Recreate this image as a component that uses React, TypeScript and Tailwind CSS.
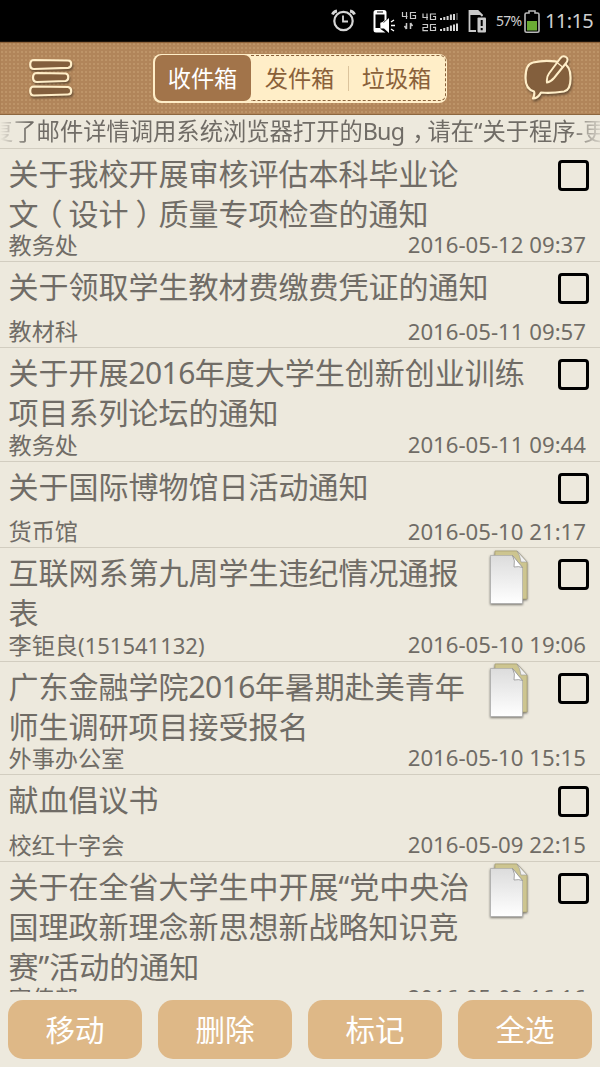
import React from "react";

type Mail = {
  title: React.ReactNode;
  sender: React.ReactNode;
  date: string;
  file?: boolean;
};

const mails: Mail[] = [
  {
    title: (
      <>
        关于我校开展审核评估本科毕业论
        <br />文<span className="-ml-[6px] mr-[6px]">（</span>设计
        <span className="ml-[7px] -mr-[7px]">）</span>质量专项检查的通知
      </>
    ),
    sender: "教务处",
    date: "2016-05-12 09:37",
  },
  { title: "关于领取学生教材费缴费凭证的通知", sender: "教材科", date: "2016-05-11 09:57" },
  {
    title: (
      <>
        关于开展<span className="tracking-[-0.6px]">2016</span>年度大学生创新创业训练
        <br />
        项目系列论坛的通知
      </>
    ),
    sender: "教务处",
    date: "2016-05-11 09:44",
  },
  { title: "关于国际博物馆日活动通知", sender: "货币馆", date: "2016-05-10 21:17" },
  {
    title: (
      <>
        互联网系第九周学生违纪情况通报
        <br />表
      </>
    ),
    sender: (
      <>
        李钜良<span className="text-[22px]">(151541132)</span>
      </>
    ),
    date: "2016-05-10 19:06",
    file: true,
  },
  {
    title: (
      <>
        广东金融学院<span className="tracking-[-0.6px]">2016</span>年暑期赴美青年
        <br />
        师生调研项目接受报名
      </>
    ),
    sender: "外事办公室",
    date: "2016-05-10 15:15",
    file: true,
  },
  { title: "献血倡议书", sender: "校红十字会", date: "2016-05-09 22:15" },
  {
    title: (
      <>
        关于在全省大学生中开展“党中央治
        <br />
        国理政新理念新思想新战略知识竞
        <br />
        赛”活动的通知
      </>
    ),
    sender: "宣传部",
    date: "2016-05-09 16:16",
    file: true,
  },
];

const StatusIcons = () => (
  <svg width="165" height="42" viewBox="325 0 165 42" fill="none">
    {/* alarm clock */}
    <g stroke="#d6d6d6">
      <circle cx="343.500" cy="21" r="9.200" strokeWidth="2.200" />
      <path d="M343 15.500v6h5" strokeWidth="1.800" />
      <path d="M332.500 14.500q1-3 4.500-3.500M354.500 14.500q-1-3-4.500-3.500" strokeWidth="2.800" />
    </g>
    {/* phone with speaker */}
    <path
      d="M376 10h8q2.500 0 2.500 2.500v7l-6 5.500v4l5 3.500H376q-2.500 0-2.500-2.500v-17.500Q373.500 10 376 10z"
      fill="#fff"
    />
    <path d="M375.500 14.500h9v6l-4 3v4.500h-5z" fill="#000" />
    <path d="M377 12h6" stroke="#000" />
    <path d="M380.500 22.500h3.500l5-4.500v15l-5-4.500h-3.500z" fill="#fff" />
    <path d="M391 22l3-2M391 25.500h4M391 29l3 2" stroke="#fff" strokeWidth="1.400" />
    {/* network labels */}
    <g stroke="#c9c9c9" strokeWidth="1.200">
      <path d="M402.500 12v4.500h5M406.500 12v7M416 12.500h-5.500v6h5v-3h-3" />
      <path d="M423 13.500v4h5M427 13.500v6.500M436 14h-5.500v5.500h5v-3h-2.500" />
      <path d="M422.500 24.500h5v3h-4.500v3.200h5M436 24.500h-5.500v6h5v-3.200h-2.500" />
      <path d="M406.500 23v6M404.500 26l2 3M410.500 29v-6M412.500 26l-2-3" strokeWidth="1.500" />
    </g>
    <path
      d="M441 20v-2M444.300 20v-3M447.600 20v-4M450.900 20v-5.500M441 31v-2M444.300 31v-3M447.600 31v-4M450.900 31v-5.500M454 31v-6.500M457 31v-7.500"
      stroke="#d6d6d6"
      strokeWidth="2"
    />
    <path d="M454 20v-6" stroke="#d6d6d6" strokeWidth="2" />
    <path d="M457 20v-7" stroke="#444" strokeWidth="2" />
    {/* sim card */}
    <path d="M476 31h-6.500V11h8l5 5" stroke="#c9c9c9" strokeWidth="1.800" />
    <path d="M470 10h8l5 5h-13z" fill="#c9c9c9" />
    <rect x="477.500" y="17.500" width="8.500" height="15" rx="1" fill="#c9c9c9" />
    <path d="M481.700 20v6M481.700 28v2.200" stroke="#000" strokeWidth="2" />
  </svg>
);

const StatusBar = () => (
  <div className="flex h-[42px] shrink-0 items-center border-b border-[#1c120a] bg-black pl-[325px] text-[#cfcfcf]">
    <StatusIcons />
    <span className="ml-[6px] w-[26px] text-[14px] tracking-[-0.7px]">57%</span>
    <svg className="ml-[2px]" width="16" height="42" viewBox="524 0 16 42" fill="none">
      <path
        d="M525 14.500q0-1.500 1.500-1.500h2.500v-2h6v2h2.500q1.500 0 1.500 1.500V31q0 1.200-1.500 1.200h-11q-1.500 0-1.500-1.200z"
        stroke="#b9b9b9"
        strokeWidth="1.600"
      />
      <rect x="527" y="21" width="10" height="9.500" fill="#6bab34" />
    </svg>
    <span className="ml-[5px] text-[20px] leading-none tracking-[-0.600px]">11:15</span>
  </div>
);

const MenuIcon = () => (
  <svg className="drop-shadow-[1px_2px_1px_#0006]" width="46" height="42" viewBox="28 57 46 42">
    <g fill="#835f3d" stroke="#ffeec8" strokeWidth="2.200">
      <path d="M34 60L68 60.500Q71.200 60.500 71.200 64T68 67.800L34 69Q30.200 69 30.200 64.500T34 60z" />
      <path d="M37 73L65.500 73.500Q68.300 74 68.300 77.300T65.500 81L37 82Q33 82 33 77.500T37 73z" />
      <path d="M34 86.500L68 87Q71.200 87.500 71.200 91T68 94.500L34 95.500Q30.200 95.500 30.200 91T34 86.500z" />
    </g>
  </svg>
);

const ComposeIcon = () => (
  <svg className="drop-shadow-[1px_2px_1px_#0006]" width="52" height="50" viewBox="522 53 52 50">
    <g fill="#835f3d" stroke="#ffeec8" strokeWidth="2.200" strokeLinejoin="round">
      <path d="M533 62.500Q548 59 563 63Q570.500 66 570.500 77Q571 90 564 91.500Q551 93.500 541 92.500Q538 98.500 533 98.500Q535 94.500 534 91.500Q525.500 89 525.500 78Q525.500 64 533 62.500z" />
      <path d="M547 82.500Q546.300 77 549 73.500L560.500 58Q563 55 566 57Q568.800 59 566.500 62.500L554 78Q550.500 82 547 82.500z" strokeWidth="2" />
      <path d="M557 62.500l5.500 4.500" strokeWidth="1.200" />
    </g>
  </svg>
);

const Header = () => (
  <div className="flex h-[73px] shrink-0 items-center border-b border-[#8d673f] bg-[#b1855a] bg-[radial-gradient(#bd9468_0.800px,transparent_1.400px)] bg-[size:4px_4px] pr-[26px] pl-[28px] shadow-[inset_0_1px_1px_#8a6038]">
    <MenuIcon />
    <div className="ml-[79px] flex h-[49px] w-[294px] rounded-lg bg-[#ffeec8] p-[1.500px] text-[23.200px] text-[#8a613a]">
      <div className="flex w-[96px] items-center justify-center rounded-[7px] bg-[#a2744a] text-white">
        收件箱
      </div>
      <div className="flex flex-1 items-center rounded-r-md border border-l-0 border-dashed border-[#8a613a]">
        <span className="flex-1 pl-px text-center">发件箱</span>
        <span className="h-[25px] w-px bg-[#dcc49c]" />
        <span className="flex-1 text-center">垃圾箱</span>
      </div>
    </div>
    <div className="ml-auto">
      <ComposeIcon />
    </div>
  </div>
);

const Notice = () => (
  <div className="h-[33.500px] shrink-0 border-b border-[#d2cdc0]">
    <div className="flex h-full items-center overflow-hidden mask-[linear-gradient(90deg,#0000,#000_30px,#000_570px,#0003)]">
      <span className="-ml-[10px] whitespace-nowrap text-[23.300px] leading-none">
        复了邮件详情调用系统浏览器打开的
        <span className="tracking-[-0.800px]">Bug</span>
        <span className="mr-[-8px] ml-[8px]">，</span>
        请在“关于程序-更
      </span>
    </div>
  </div>
);

const FileIcon = () => (
  <svg className="drop-shadow-[0_1px_1px_#0008]" width="42" height="58" viewBox="488 548 42 58">
    <defs>
      <linearGradient id="paper" x1="0" y1="0" x2="0" y2="1">
        <stop offset="0" stopColor="#dcdcdc" />
        <stop offset="1" stopColor="#fff" />
      </linearGradient>
    </defs>
    <path d="M495 550h22l10 11v37h-32z" fill="#cdc590" stroke="#aaa173" strokeWidth="0.800" />
    <path d="M517 550l10 11h-6q-1-7-4-11z" fill="#f1f1f1" stroke="#999" strokeWidth="0.600" />
    <path d="M490.500 554.500h22l10 12v36h-32z" fill="url(#paper)" stroke="#aaa" strokeWidth="0.700" />
    <path d="M512.500 554.500q3 5 1.500 11.500 5-1 8.500.5z" fill="#fff" stroke="#888" strokeWidth="0.700" />
  </svg>
);

const MailRow = ({ mail }: { mail: Mail }) => (
  <div className="flex shrink-0 flex-col border-b border-[#d2cdc0]">
    <div className="flex min-h-[53.300px] items-start pl-[8.500px]">
      <div className="-mb-[5px] flex-1 pt-[5px] whitespace-nowrap text-[30px] leading-[40px]">
        {mail.title}
      </div>
      {mail.file && (
        <div className="-mb-5 mr-[28px] pt-[0.500px]">
          <FileIcon />
        </div>
      )}
      <div className="mt-[11px] mr-[11px] h-[31px] w-[31px] rounded-[4px] border-[3px] border-black" />
    </div>
    <div className="flex h-[32.350px] items-center justify-between pt-px pr-[14px] pl-[8.500px] leading-none">
      <span className="text-[23.200px]">{mail.sender}</span>
      <span className="text-[22.200px]">{mail.date}</span>
    </div>
  </div>
);

const App = () => {
  return (
    <div className="flex h-[1067px] w-[600px] flex-col overflow-hidden bg-[#ede9dd] font-['Noto_Sans','Noto_Sans_CJK_SC',sans-serif] text-[#706c66]">
      <StatusBar />
      <Header />
      <Notice />
      <div className="flex h-[843.500px] shrink-0 flex-col overflow-hidden">
        {mails.map((mail) => (
          <MailRow key={mail.date} mail={mail} />
        ))}
      </div>
      <div className="flex flex-1 gap-4 px-2 pt-2 pb-2">
        {["移动", "删除", "标记", "全选"].map((label) => (
          <button
            key={label}
            className="flex-1 rounded-[15px] bg-[#deb887] pt-px text-[29.500px] text-white"
          >
            {label}
          </button>
        ))}
      </div>
    </div>
  );
};

export default App;
